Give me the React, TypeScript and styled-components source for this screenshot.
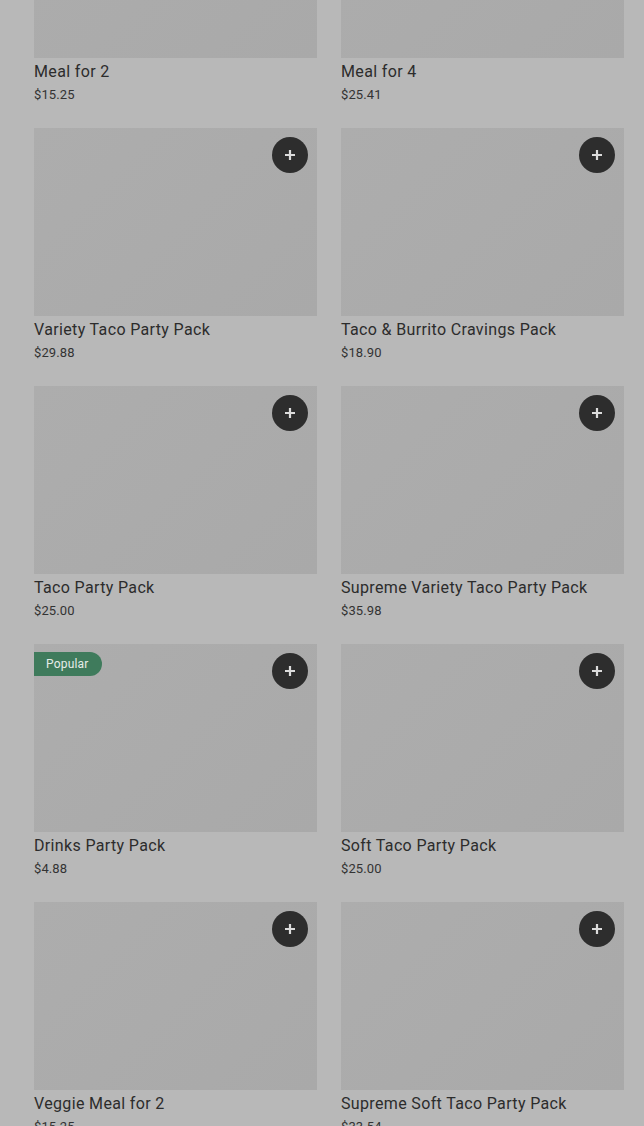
import styled, { createGlobalStyle } from 'styled-components'

const GlobalStyle = createGlobalStyle`
	html, body {
		margin: 0;
		padding: 0;
		background: #b8b8b8;
		overflow: hidden;
	}
	body {
		font-family: Roboto, 'Liberation Sans', sans-serif;
		color: #2f2f2f;
	}
`

type Item = { name: string; price: string; popular?: boolean }

const items: Item[] = [
	{ name: 'Meal for 2', price: '$15.25' },
	{ name: 'Meal for 4', price: '$25.41' },
	{ name: 'Variety Taco Party Pack', price: '$29.88' },
	{ name: 'Taco & Burrito Cravings Pack', price: '$18.90' },
	{ name: 'Taco Party Pack', price: '$25.00' },
	{ name: 'Supreme Variety Taco Party Pack', price: '$35.98' },
	{ name: 'Drinks Party Pack', price: '$4.88', popular: true },
	{ name: 'Soft Taco Party Pack', price: '$25.00' },
	{ name: 'Veggie Meal for 2', price: '$15.25' },
	{ name: 'Supreme Soft Taco Party Pack', price: '$33.54' },
]

function PlusIcon() {
	return (
		<svg width='14' height='14' viewBox='0 0 14 14'>
			<path d='M7 2v10M2 7h10' stroke='#dcdcdc' strokeWidth='2.2' strokeLinecap='butt' />
		</svg>
	)
}

function App() {
	return (
		<>
			<GlobalStyle />
			<Grid>
				{items.map((item) => (
					<Card key={item.name}>
						<Thumb>
							{item.popular && <Badge>Popular</Badge>}
							<AddButton type='button' aria-label={`Add ${item.name}`}>
								<PlusIcon />
							</AddButton>
						</Thumb>
						<Title>{item.name}</Title>
						<Price>{item.price}</Price>
					</Card>
				))}
			</Grid>
		</>
	)
}

const Grid = styled.div`
	display: grid;
	grid-template-columns: 283px 283px;
	column-gap: 24px;
	row-gap: 23px;
	padding: 0 20px 0 34px;
	margin-top: -130px;
`

const Card = styled.div`
	display: flex;
	flex-direction: column;
`

const Thumb = styled.div`
	position: relative;
	height: 188px;
	background: linear-gradient(135deg, #adadad 0%, #a9a9a9 100%);
`

const Badge = styled.span`
	position: absolute;
	top: 8px;
	left: 0;
	height: 24px;
	padding: 0 13px 0 12px;
	display: flex;
	align-items: center;
	background: #3f7b5c;
	color: #e6ece8;
	font-size: 12px;
	letter-spacing: 0.2px;
	border-radius: 0 12px 12px 0;
`

const AddButton = styled.button`
	position: absolute;
	top: 9px;
	right: 9px;
	width: 36px;
	height: 36px;
	border: none;
	border-radius: 50%;
	background: #2d2d2d;
	display: flex;
	align-items: center;
	justify-content: center;
	padding: 0;
`

const Title = styled.div`
	margin-top: 2px;
	font-size: 16px;
	line-height: 24px;
	font-weight: 400;
	letter-spacing: 0.35px;
	color: #2c2c2c;
	white-space: nowrap;
`

const Price = styled.div`
	margin-top: 1px;
	font-size: 13px;
	line-height: 20px;
	letter-spacing: 0.1px;
	color: #333;
`

export default App
